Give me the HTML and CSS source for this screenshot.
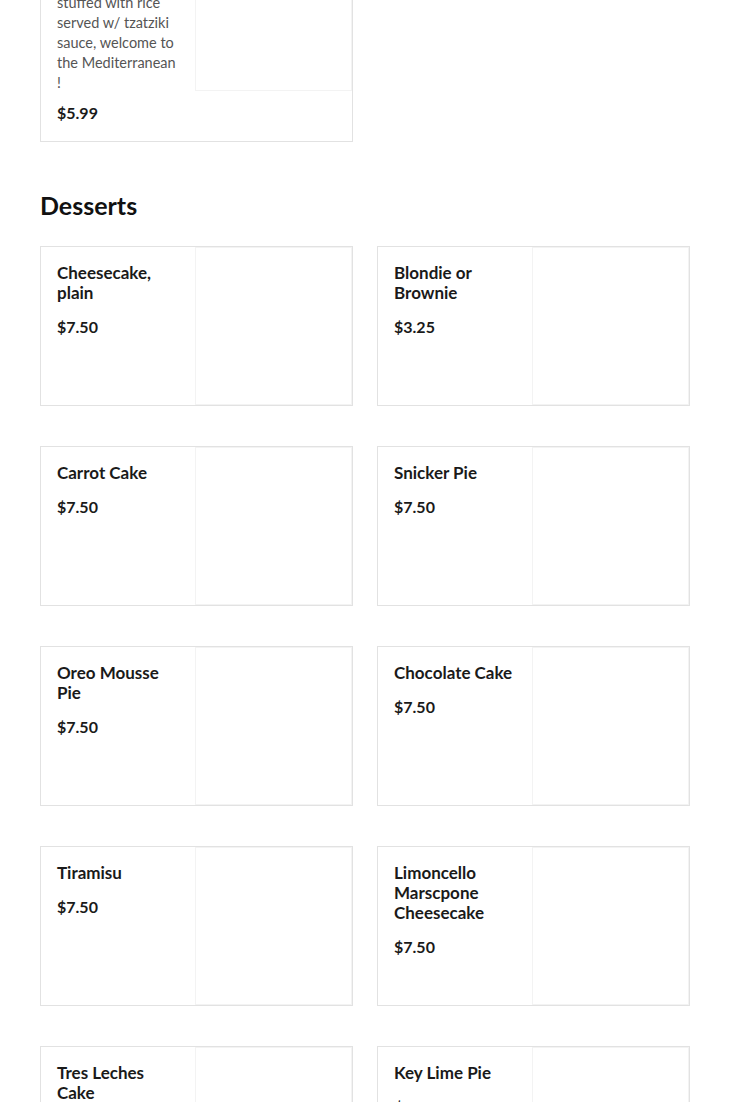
FILE: index.html
```html
<!DOCTYPE html>
<html lang="en">
<head>
<meta charset="utf-8">
<title>Menu</title>
<link rel="stylesheet" href="styles.css">
</head>
<body>
<main class="page">
  <section class="section section-first">
    <div class="grid">
      <article class="card">
        <div class="card-body">
          <h3 class="title">Dolmades</h3>
          <p class="desc">Grape leaves stuffed with rice served w/ tzatziki sauce, welcome to the Mediterranean !</p>
          <p class="price">$5.99</p>
        </div>
        <div class="card-img"></div>
      </article>
    </div>
  </section>

  <section class="section">
    <h2 class="section-title">Desserts</h2>
    <div class="grid">
      <article class="card">
        <div class="card-body">
          <h3 class="title">Cheesecake, plain</h3>
          <p class="price">$7.50</p>
        </div>
        <div class="card-img"></div>
      </article>
      <article class="card">
        <div class="card-body">
          <h3 class="title">Blondie or Brownie</h3>
          <p class="price">$3.25</p>
        </div>
        <div class="card-img"></div>
      </article>
      <article class="card">
        <div class="card-body">
          <h3 class="title">Carrot Cake</h3>
          <p class="price">$7.50</p>
        </div>
        <div class="card-img"></div>
      </article>
      <article class="card">
        <div class="card-body">
          <h3 class="title">Snicker Pie</h3>
          <p class="price">$7.50</p>
        </div>
        <div class="card-img"></div>
      </article>
      <article class="card">
        <div class="card-body">
          <h3 class="title">Oreo Mousse Pie</h3>
          <p class="price">$7.50</p>
        </div>
        <div class="card-img"></div>
      </article>
      <article class="card">
        <div class="card-body">
          <h3 class="title">Chocolate Cake</h3>
          <p class="price">$7.50</p>
        </div>
        <div class="card-img"></div>
      </article>
      <article class="card">
        <div class="card-body">
          <h3 class="title">Tiramisu</h3>
          <p class="price">$7.50</p>
        </div>
        <div class="card-img"></div>
      </article>
      <article class="card">
        <div class="card-body">
          <h3 class="title">Limoncello Marscpone Cheesecake</h3>
          <p class="price">$7.50</p>
        </div>
        <div class="card-img"></div>
      </article>
      <article class="card">
        <div class="card-body">
          <h3 class="title">Tres Leches Cake</h3>
          <p class="price">$7.50</p>
        </div>
        <div class="card-img"></div>
      </article>
      <article class="card">
        <div class="card-body">
          <h3 class="title">Key Lime Pie</h3>
          <p class="price">$7.50</p>
        </div>
        <div class="card-img"></div>
      </article>
    </div>
  </section>
</main>
</body>
</html>
```

FILE: styles.css
```css
* {
  box-sizing: border-box;
}

html, body {
  margin: 0;
  padding: 0;
  background: #ffffff;
}

body {
  font-family: Lato, "Open Sans", "Liberation Sans", sans-serif;
  color: #1a1a1a;
}

.page {
  margin-top: -68px;
  padding: 0 40px 40px;
}

.section-first {
  margin-bottom: 49px;
}

.section-title {
  margin: 0 0 26px;
  font-size: 25px;
  line-height: 29px;
  font-weight: 700;
  color: #111111;
}

.grid {
  display: grid;
  grid-template-columns: 1fr 1fr;
  column-gap: 24px;
  row-gap: 40px;
}

.card {
  display: flex;
  align-items: flex-start;
  border: 1px solid #e2e2e2;
  background: #ffffff;
}

.card-body {
  flex: 1;
  min-width: 0;
  padding: 16px 16px 18px;
}

.title {
  margin: 0;
  font-size: 17px;
  line-height: 20px;
  font-weight: 700;
  color: #1a1a1a;
}

.desc {
  margin: 4px 0 0;
  font-size: 14.5px;
  line-height: 20px;
  color: #555555;
}

.price {
  margin: 14px 0 0;
  font-size: 16px;
  line-height: 20px;
  font-weight: 700;
  color: #1a1a1a;
}

.desc + .price {
  margin-top: 10px;
}

.card-img {
  flex: none;
  width: 157px;
  height: 158px;
  border: 1px solid #f3f3f3;
  background: #ffffff;
}
```
